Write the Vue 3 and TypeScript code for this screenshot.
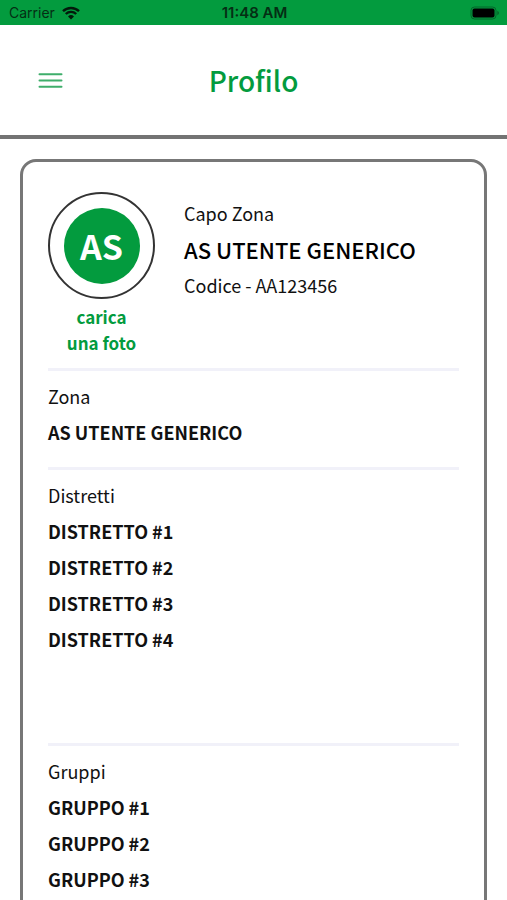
<script setup lang="ts">
interface Section {
  label: string
  items: string[]
  tall?: boolean
}

const user = {
  initials: 'AS',
  role: 'Capo Zona',
  name: 'AS UTENTE GENERICO',
  code: 'AA123456',
}

const sections: Section[] = [
  { label: 'Zona', items: ['AS UTENTE GENERICO'] },
  {
    label: 'Distretti',
    items: ['DISTRETTO #1', 'DISTRETTO #2', 'DISTRETTO #3', 'DISTRETTO #4'],
    tall: true,
  },
  { label: 'Gruppi', items: ['GRUPPO #1', 'GRUPPO #2', 'GRUPPO #3'] },
]
</script>

<template>
  <div class="page">
    <div class="status">
      <div class="carrier">
        <span>Carrier</span>
        <svg class="wifi" viewBox="0 0 18 14" aria-hidden="true">
          <path d="M1 5.2a11.5 11.5 0 0 1 16 0" />
          <path d="M3.8 8a7.5 7.5 0 0 1 10.4 0" />
          <path class="solid" d="M9 13.6 6 10.5a4.3 4.3 0 0 1 6 0z" />
        </svg>
      </div>
      <span class="time">11:48 AM</span>
      <svg class="battery" viewBox="0 0 30 14" aria-hidden="true">
        <rect class="shell" x="1" y="1" width="25" height="12" rx="3.5" />
        <rect x="2.500" y="2.500" width="22" height="9" rx="2" />
        <path class="tip" d="M27.300 4.800q1.700.7 1.700 2.200t-1.700 2.200z" />
      </svg>
    </div>

    <header class="header">
      <button class="menu" type="button" aria-label="Menu">
        <svg viewBox="0 0 25 19" aria-hidden="true">
          <path d="M1.500 3.200h22M1.500 9.500h22M1.500 15.800h22" />
        </svg>
      </button>
      <h1 class="title">Profilo</h1>
    </header>

    <main class="card">
      <div class="hero">
        <button class="photo" type="button">
          <span class="ring"><span class="disc">{{ user.initials }}</span></span>
          <span class="upload">carica<br />una foto</span>
        </button>
        <div class="info">
          <p class="text">{{ user.role }}</p>
          <p class="name">{{ user.name }}</p>
          <p class="text">Codice - {{ user.code }}</p>
        </div>
      </div>

      <section
        v-for="section in sections"
        :key="section.label"
        class="section"
        :class="{ tall: section.tall }"
      >
        <h2 class="text">{{ section.label }}</h2>
        <ul class="list">
          <li v-for="item in section.items" :key="item">{{ item }}</li>
        </ul>
      </section>
    </main>
  </div>
</template>

<style>
body {
  margin: 0;
  background: #fff;
}
</style>

<style scoped>
.page {
  min-height: 100vh;
  color: #111;
  font-family: 'Noto Sans CJK SC', 'Noto Sans', sans-serif;
}

.status {
  display: grid;
  grid-template-columns: 1fr auto 1fr;
  align-items: center;
  height: 25px;
  padding: 0 7px 0 9px;
  background: #039b3e;
  color: #052e14;
  font-family: Inter, 'Liberation Sans', sans-serif;
  font-size: 14px;
  line-height: 26px;
}

.carrier {
  display: flex;
  align-items: center;
  gap: 7px;
}

.time {
  font-size: 15px;
  font-weight: 600;
}

.wifi {
  width: 18px;
  height: 14px;
  fill: none;
  stroke: #031a0b;
  stroke-width: 2.400;
}

.wifi .solid {
  fill: #031a0b;
  stroke: none;
}

.battery {
  justify-self: end;
  width: 30px;
  height: 14px;
  fill: #000;
}

.battery .shell {
  fill: none;
  stroke: #04662a;
}

.battery .tip {
  fill: #04662a;
}

.header {
  display: grid;
  grid-template-columns: 1fr auto 1fr;
  align-items: center;
  height: 110px;
  padding: 0 38px;
  border-bottom: 4px solid #737373;
}

.menu {
  display: flex;
  justify-self: start;
  padding: 0;
  border: 0;
  background: none;
  cursor: pointer;
}

.menu svg {
  width: 25px;
  height: 19px;
  fill: none;
  stroke: #3fae6b;
  stroke-width: 2;
  stroke-linecap: round;
}

.title {
  margin: 0;
  color: #039b3e;
  font-size: 28px;
  font-weight: 500;
  line-height: 40px;
}

.card {
  margin: 20px 20px 0;
  padding: 0 25px;
  border: 3px solid #777;
  border-radius: 16px;
}

.hero {
  display: flex;
  gap: 29px;
  padding: 30px 0 12px;
}

.photo {
  display: flex;
  flex-direction: column;
  align-items: center;
  gap: 5px;
  padding: 0;
  border: 0;
  background: none;
  color: #039b3e;
  font-family: inherit;
  cursor: pointer;
}

.ring {
  display: grid;
  place-items: center;
  box-sizing: border-box;
  width: 107px;
  height: 107px;
  border: 2px solid #333;
  border-radius: 50%;
}

.disc {
  width: 76px;
  height: 76px;
  border-radius: 50%;
  background: #039b3e;
  color: #fff;
  font-size: 34px;
  font-weight: 700;
  line-height: 76px;
  text-align: center;
}

.upload {
  font-size: 17px;
  font-weight: 700;
  line-height: 26px;
}

.info {
  padding-top: 3px;
}

.text,
.name {
  margin: 0;
  font-size: 18px;
  font-weight: 400;
  line-height: 36px;
}

.name {
  color: #000;
  font-size: 22px;
  font-weight: 500;
}

.section {
  padding: 7px 0 17px;
  border-top: 3px solid #f1f1f9;
}

.list {
  margin: 0;
  padding: 0;
  font-size: 18px;
  font-weight: 700;
  line-height: 36px;
  list-style: none;
}

.tall .list {
  min-height: 213px;
}
</style>
